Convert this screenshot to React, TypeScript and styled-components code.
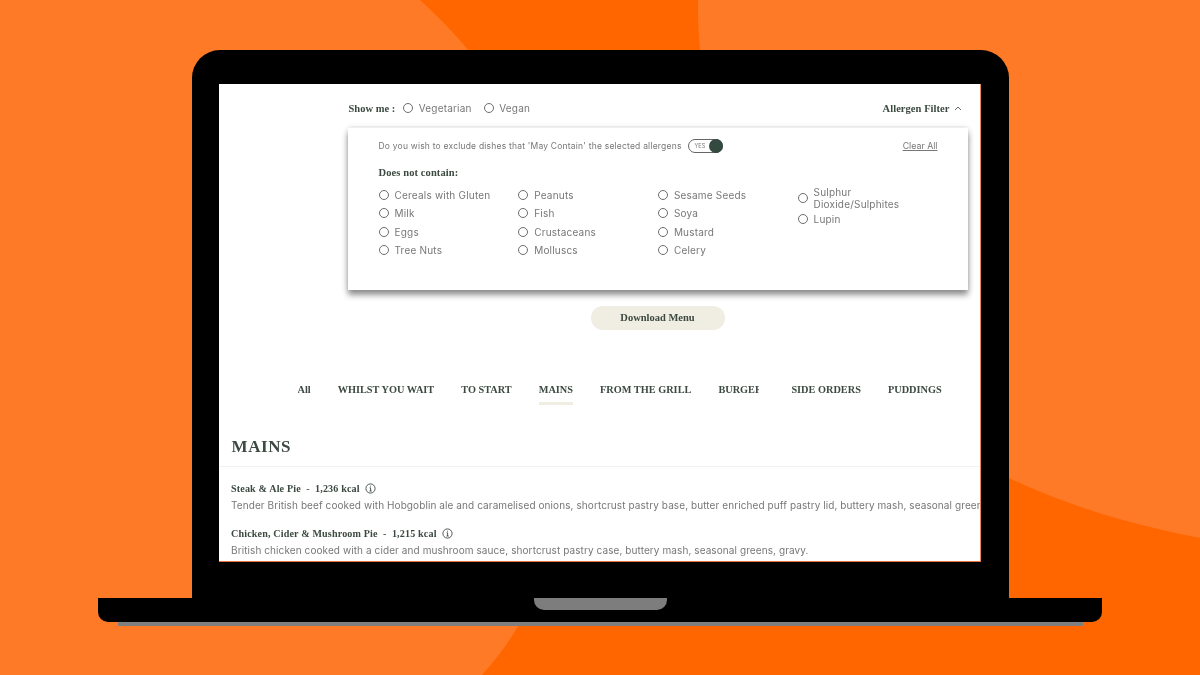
import React from 'react'
import styled, { createGlobalStyle } from 'styled-components'

const sans = `"Inter", "Noto Sans", sans-serif`
const serif = `"Liberation Serif", serif`

const allergens = [
  ['Cereals with Gluten', 'Milk', 'Eggs', 'Tree Nuts'],
  ['Peanuts', 'Fish', 'Crustaceans', 'Molluscs'],
  ['Sesame Seeds', 'Soya', 'Mustard', 'Celery'],
]

const tabs = ['All', 'WHILST YOU WAIT', 'TO START', 'MAINS', 'FROM THE GRILL', 'BURGER', 'SIDE ORDERS', 'PUDDINGS']

const App = () => {
  return (
    <Stage>
      <GlobalStyle />
      <Backdrop viewBox="0 0 1200 675" aria-hidden="true">
        <path d="M420 0 L698 0 C695 150 780 370 1009 478 C1080 512 1150 528 1200 538 L1200 675 L482 675 C518 635 535 600 540 560 L540 200 C530 120 475 50 420 0 Z" fill="#ff6600" />
      </Backdrop>
      <Laptop>
        <Lid>
          <Screen>
            <TopRow>
              <ShowGroup>
                <ShowLabel>Show me :</ShowLabel>
                <Radio />
                <ShowOption>Vegetarian</ShowOption>
                <Radio />
                <ShowOption>Vegan</ShowOption>
              </ShowGroup>
              <FilterToggle>
                Allergen Filter
                <svg width="8" height="5" viewBox="0 0 8 5" fill="none" stroke="#666" strokeWidth="1">
                  <path d="M1 4 L4 1 L7 4" />
                </svg>
              </FilterToggle>
            </TopRow>
            <FilterPanel>
              <PanelHead>
                <Question>Do you wish to exclude dishes that 'May Contain' the selected allergens</Question>
                <Toggle>
                  <ToggleText>YES</ToggleText>
                  <ToggleKnob />
                </Toggle>
                <ClearAll>Clear All</ClearAll>
              </PanelHead>
              <PanelTitle>Does not contain:</PanelTitle>
              <AllergenGrid>
                {allergens.map((column, i) => (
                  <AllergenColumn key={i}>
                    {column.map((name) => (
                      <AllergenRow key={name}>
                        <Radio />
                        <span>{name}</span>
                      </AllergenRow>
                    ))}
                  </AllergenColumn>
                ))}
                <AllergenColumn>
                  <TallRow>
                    <Radio />
                    <span>Sulphur<br />Dioxide/Sulphites</span>
                  </TallRow>
                  <AllergenRow>
                    <Radio />
                    <span>Lupin</span>
                  </AllergenRow>
                </AllergenColumn>
              </AllergenGrid>
            </FilterPanel>
            <DownloadButton>Download Menu</DownloadButton>
            <Tabs>
              {tabs.map((tab) => (
                <Tab key={tab} $active={tab === 'MAINS'} $clipped={tab === 'BURGER'}>{tab}</Tab>
              ))}
            </Tabs>
            <SectionTitle>MAINS</SectionTitle>
            <Dishes>
              <Dish>
                <DishName>
                  Steak &amp; Ale Pie&nbsp; <Dash>-</Dash>&nbsp; 1,236 kcal
                  <InfoIcon />
                </DishName>
                <DishText>Tender British beef cooked with Hobgoblin ale and caramelised onions, shortcrust pastry base, butter enriched puff pastry lid, buttery mash, seasonal greens, gravy.</DishText>
              </Dish>
              <Dish>
                <DishName>
                  Chicken, Cider &amp; Mushroom Pie&nbsp; <Dash>-</Dash>&nbsp; 1,215 kcal
                  <InfoIcon />
                </DishName>
                <DishText>British chicken cooked with a cider and mushroom sauce, shortcrust pastry case, buttery mash, seasonal greens, gravy.</DishText>
              </Dish>
            </Dishes>
          </Screen>
        </Lid>
        <Base>
          <Notch />
        </Base>
        <BaseShadow />
      </Laptop>
    </Stage>
  )
}

const InfoIcon = () => (
  <InfoSvg width="11" height="11" viewBox="0 0 11 11" fill="none" stroke="#3d4a42" strokeWidth="0.9">
    <circle cx="5.5" cy="5.5" r="4.6" />
    <path d="M4.6 4.8 H5.6 V8 M4.5 8 H6.7 M5.5 2.7 V3.6" />
  </InfoSvg>
)

const GlobalStyle = createGlobalStyle`
  html, body {
    margin: 0;
    padding: 0;
    overflow: hidden;
  }
`

const Stage = styled.div`
  position: relative;
  width: 1200px;
  height: 675px;
  padding-top: 50px;
  box-sizing: border-box;
  background: #ff7a26;
  overflow: hidden;
`
const Backdrop = styled.svg`
  position: absolute;
  inset: 0;
  width: 1200px;
  height: 675px;
`
const Laptop = styled.div`
  position: relative;
  display: flex;
  flex-direction: column;
  align-items: center;
`
const Lid = styled.div`
  width: 817px;
  height: 548px;
  box-sizing: border-box;
  padding: 34px 28px 36px 27px;
  background: #000;
  border-radius: 28px 28px 0 0;
`
const Screen = styled.div`
  width: 762px;
  height: 478px;
  box-sizing: border-box;
  background: #fff;
  border-right: 1px solid #e8885a;
  border-bottom: 1px solid #e8703a;
  overflow: hidden;
  color: #3c4a41;
  filter: blur(0.3px);
`
const Base = styled.div`
  display: flex;
  justify-content: center;
  width: 1004px;
  height: 24px;
  background: #000;
  border-radius: 0 0 10px 10px;
`
const Notch = styled.div`
  width: 133px;
  height: 12px;
  background: #7d7d7d;
  border-radius: 0 0 10px 10px;
`
const BaseShadow = styled.div`
  width: 965px;
  height: 4px;
  background: #7f7f7f;
`
const TopRow = styled.div`
  display: flex;
  justify-content: space-between;
  align-items: center;
  height: 43px;
  margin: 0 12px 0 130px;
  padding: 5px 6px 0 0;
  box-sizing: border-box;
  border-bottom: 1px solid #f6f6f6;
`
const ShowGroup = styled.div`
  display: flex;
  align-items: center;
`
const ShowLabel = styled.span`
  padding-top: 1px;
  font: bold 10.5px ${serif};
  margin-right: 8px;
`
const ShowOption = styled.span`
  font: 10px ${sans};
  letter-spacing: 0.2px;
  color: #777;
  margin: 0 12px 0 5.5px;
`
const Radio = styled.span`
  flex: none;
  width: 10px;
  height: 10px;
  box-sizing: border-box;
  border: 1px solid #6a6f6b;
  border-radius: 50%;
  background: #fff;
`
const FilterToggle = styled.div`
  display: flex;
  align-items: center;
  gap: 4px;
  padding-top: 1px;
  font: bold 10.5px ${serif};
  letter-spacing: 0.05px;
`
const FilterPanel = styled.div`
  width: 620px;
  height: 162px;
  margin: 1px 0 0 129px;
  padding: 0 30px 0 31px;
  box-sizing: border-box;
  background: #fff;
  box-shadow: 0 5px 6px rgba(0, 0, 0, 0.42), 0 0 6px rgba(0, 0, 0, 0.12);
`
const PanelHead = styled.div`
  display: flex;
  align-items: center;
  height: 36px;
`
const Question = styled.span`
  font: 8.5px ${sans};
  letter-spacing: 0.21px;
  color: #777;
`
const Toggle = styled.div`
  display: flex;
  align-items: center;
  justify-content: space-between;
  width: 27px;
  height: 12px;
  margin-left: 6px;
  padding-left: 6px;
  border: 1px solid #666;
  border-radius: 8px;
`
const ToggleText = styled.span`
  font: 5.5px ${sans};
  color: #777;
`
const ToggleKnob = styled.span`
  width: 14px;
  height: 14px;
  margin-right: -1px;
  border-radius: 50%;
  background: #34493f;
`
const ClearAll = styled.a`
  margin: -2px 0 0 auto;
  font: 8.8px ${sans};
  color: #777;
  text-decoration: underline;
`
const PanelTitle = styled.div`
  margin-top: 3px;
  font: bold 10.5px ${serif};
  letter-spacing: 0.1px;
`
const AllergenGrid = styled.div`
  display: grid;
  grid-template-columns: repeat(4, 139.7px);
  margin-top: 8px;
  font: 10px ${sans};
  letter-spacing: 0.2px;
  color: #777;
`
const AllergenColumn = styled.div`
  display: flex;
  flex-direction: column;
`
const AllergenRow = styled.div`
  display: flex;
  align-items: center;
  gap: 6px;
  height: 18.3px;
`
const TallRow = styled(AllergenRow)`
  height: 24px;
  line-height: 12px;
`
const DownloadButton = styled.button`
  display: block;
  width: 134px;
  height: 24px;
  margin: 16px 0 0 372px;
  padding-bottom: 2px;
  border: 0;
  border-radius: 12px;
  background: #f0ede3;
  color: #3c4a41;
  font: bold 10.5px ${serif};
`
const Tabs = styled.div`
  display: flex;
  gap: 27px;
  margin: 53px 0 0 79px;
`
const Tab = styled.div<{ $active?: boolean; $clipped?: boolean }>`
  flex: none;
  width: ${(p) => (p.$clipped ? '41px' : 'auto')};
  height: 22px;
  box-sizing: border-box;
  border-bottom: 3px solid ${(p) => (p.$active ? '#f0ede3' : 'transparent')};
  font: bold 10.3px/14px ${serif};
  white-space: nowrap;
  overflow: hidden;
  margin-right: ${(p) => (p.$clipped ? '5px' : '0')};
`
const SectionTitle = styled.h2`
  margin: 31px 0 0;
  padding: 0 0 8px 13px;
  border-bottom: 1px solid #f1f1f1;
  font: bold 17px/22px ${serif};
  letter-spacing: 0.6px;
`
const Dishes = styled.div`
  display: flex;
  flex-direction: column;
  gap: 15px;
  padding: 15px 0 0 12.5px;
`
const Dish = styled.div`
  display: flex;
  flex-direction: column;
  gap: 4px;
`
const DishName = styled.div`
  display: flex;
  align-items: center;
  font: bold 10.1px/13px ${serif};
  letter-spacing: 0.15px;
  white-space: pre;
`
const Dash = styled.span`
  font-weight: normal;
`
const InfoSvg = styled.svg`
  margin-left: 5px;
`
const DishText = styled.div`
  font: 10px/13px ${sans};
  letter-spacing: 0.09px;
  color: #777;
  white-space: nowrap;
`

export default App
